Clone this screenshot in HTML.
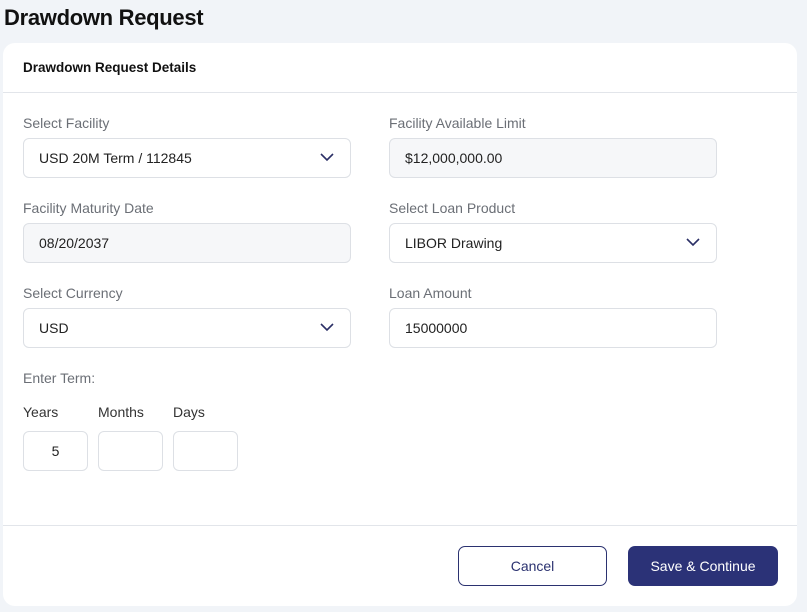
<!DOCTYPE html><html><head><style>
body{margin:0;width:807px;height:612px;background:#f1f4f8;font-family:"Liberation Sans",sans-serif;position:relative;overflow:hidden}
.a{position:absolute}
h1{position:absolute;left:4px;top:5px;margin:0;font-size:22px;font-weight:bold;color:#111;letter-spacing:-0.3px}
.card{position:absolute;left:3px;top:43px;width:794px;height:563px;background:#fff;border-radius:12px}
.lbl{position:absolute;font-size:14px;color:#6b6f76}
.in{position:absolute;width:326px;height:38px;border:1px solid #dde0e5;border-radius:6px;background:#fff;font-size:14px;color:#222;box-sizing:content-box;line-height:38px;text-indent:15px}
.ro{background:#f6f7f9}
.chev{position:absolute;right:16px;top:14px}
.sm{position:absolute;width:63px;height:38px;border:1px solid #dde0e5;border-radius:6px;text-align:center;line-height:38px;font-size:14px;color:#222}
.btn{position:absolute;top:546px;width:148px;height:38px;border-radius:7px;font-size:14px;text-align:center;line-height:38px}
</style></head><body>
<h1>Drawdown Request</h1>
<div class="card"></div>
<div class="a" style="left:23px;top:60px;font-size:13.5px;font-weight:bold;color:#111">Drawdown Request Details</div>
<div class="a" style="left:3px;top:92px;width:794px;height:1px;background:#e2e5ea"></div>
<div class="lbl" style="left:23px;top:115px">Select Facility</div>
<div class="in" style="left:23px;top:138px">USD 20M Term / 112845<svg class="chev" width="14" height="9" viewBox="0 0 14 9"><path d="M1 1l6 6 6-6" fill="none" stroke="#2b2f66" stroke-width="1.6"/></svg></div>
<div class="lbl" style="left:389px;top:115px">Facility Available Limit</div>
<div class="in ro" style="left:389px;top:138px">$12,000,000.00</div>
<div class="lbl" style="left:23px;top:200px">Facility Maturity Date</div>
<div class="in ro" style="left:23px;top:223px">08/20/2037</div>
<div class="lbl" style="left:389px;top:200px">Select Loan Product</div>
<div class="in" style="left:389px;top:223px">LIBOR Drawing<svg class="chev" width="14" height="9" viewBox="0 0 14 9"><path d="M1 1l6 6 6-6" fill="none" stroke="#2b2f66" stroke-width="1.6"/></svg></div>
<div class="lbl" style="left:23px;top:285px">Select Currency</div>
<div class="in" style="left:23px;top:308px">USD<svg class="chev" width="14" height="9" viewBox="0 0 14 9"><path d="M1 1l6 6 6-6" fill="none" stroke="#2b2f66" stroke-width="1.6"/></svg></div>
<div class="lbl" style="left:389px;top:285px">Loan Amount</div>
<div class="in" style="left:389px;top:308px">15000000</div>
<div class="lbl" style="left:23px;top:370px">Enter Term:</div>
<div class="lbl" style="left:23px;top:404px;color:#333">Years</div>
<div class="lbl" style="left:98px;top:404px;color:#333">Months</div>
<div class="lbl" style="left:173px;top:404px;color:#333">Days</div>
<div class="sm" style="left:23px;top:431px">5</div>
<div class="sm" style="left:98px;top:431px"></div>
<div class="sm" style="left:173px;top:431px"></div>
<div class="a" style="left:3px;top:525px;width:794px;height:1px;background:#e2e5ea"></div>
<div class="btn" style="left:458px;border:1px solid #2b3270;color:#2b3270;width:147px">Cancel</div>
<div class="btn" style="left:628px;width:150px;height:40px;line-height:40px;background:#2b3277;color:#fff">Save &amp; Continue</div>
</body></html>
